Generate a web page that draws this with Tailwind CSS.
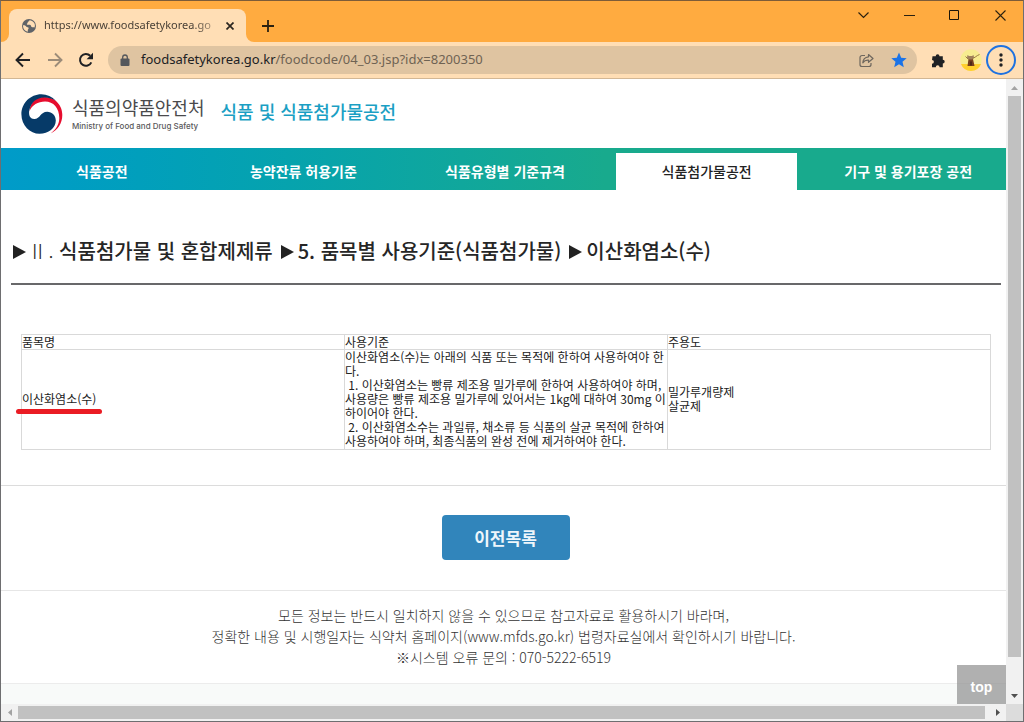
<!DOCTYPE html>
<html lang="ko">
<head>
<meta charset="utf-8">
<title>식품 및 식품첨가물공전</title>
<script src="https://cdn.jsdelivr.net/npm/@tailwindcss/browser@4"></script>
</head>
<body class="h-screen overflow-hidden bg-white font-['Noto_Sans_CJK_KR',sans-serif] text-[#333]">
<div class="flex h-full flex-col border border-[#6e6e70] border-t-[#7d5c38]">

  <!-- Tab strip -->
  <div class="flex h-[41px] shrink-0 bg-[#ffab40]">
    <div class="flex w-2 items-end bg-[#ffdeb5]"><div class="h-full w-full rounded-br-lg bg-[#ffab40]"></div></div>
    <div class="mt-2 flex w-[237px] items-center rounded-t-lg bg-[#ffdeb5] pr-2 pl-3">
      <svg class="size-4 shrink-0" viewBox="0 0 16 16"><circle cx="8" cy="8" r="7" fill="#5f6368"/><path d="M2 7.2c1.500-.2 2.500.3 3.200 1.200.6.8 1.800.5 2.300 1.300.5 1-.6 1.400-.7 2.300v1.800C4 13.300 2 11 2 8zM8.300 2.200c.3 1-.7 1.300-1.300 1.600-.6.400.2 1.200-.8 1.700-.7.400-.3 1.400.6 1.300 1-.1 2-.4 2.700.3.600.6.300 1.600 1.200 2 1 .4 2-.1 2.800.4.5-1.200.6-2.800 0-4C12.600 3.500 10.600 2.200 8.300 2.200z" fill="#ffdeb5"/></svg>
      <span class="ml-[7px] flex-1 font-['Noto_Sans',sans-serif] text-[11px] whitespace-nowrap text-[#4b4238] [mask-image:linear-gradient(to_right,black_88%,rgb(0_0_0/0.4))]">https://www.foodsafetykorea.go</span>
      <button aria-label="탭 닫기" class="ml-2 flex size-4 shrink-0 items-center justify-center"><svg class="size-2" viewBox="0 0 8 8"><path d="M.5.5l7 7M7.500.5l-7 7" stroke="#2b2620" stroke-width="1.700"/></svg></button>
    </div>
    <div class="w-2 bg-[#ffdeb5]"><div class="h-full w-full rounded-bl-lg bg-[#ffab40]"></div></div>
    <button aria-label="새 탭" class="mt-2 flex w-7 items-center justify-center"><svg class="size-3" viewBox="0 0 12 12"><path d="M6 0v12M0 6h12" stroke="#2b2110" stroke-width="1.800"/></svg></button>
    <div class="ml-auto flex h-7 items-center">
      <button aria-label="탭 검색" class="flex w-[45px] justify-center"><svg class="h-[7px] w-[11px]" viewBox="0 0 11 7" fill="none"><path d="M.5.5l5 5 5-5" stroke="#2b2110" stroke-width="1.200"/></svg></button>
      <button aria-label="최소화" class="flex w-[46px] justify-center"><svg class="h-[11px] w-[11px]" viewBox="0 0 11 11"><path d="M0 5.500h11" stroke="#2b2110"/></svg></button>
      <button aria-label="최대화" class="flex w-[45px] justify-center"><svg class="h-[11px] w-[11px]" viewBox="0 0 11 11"><path d="M.5.5h9v9h-9z" fill="none" stroke="#1c1509"/></svg></button>
      <button aria-label="닫기" class="flex w-[46px] justify-center"><svg class="h-[11px] w-[11px]" viewBox="0 0 11 11"><path d="M.5.5l10 10M10.500.5l-10 10" stroke="#2b2110" stroke-width="1.100"/></svg></button>
    </div>
  </div>

  <!-- Toolbar -->
  <div class="flex h-9 shrink-0 items-center bg-[#ffdeb5] pr-[7px] pl-[14px]">
    <button aria-label="뒤로" class="mr-4 size-4"><svg viewBox="0 0 16 16" fill="none" stroke="#202124" stroke-width="1.900"><path d="M15 8H2M8 1.500L1.500 8 8 14.500"/></svg></button>
    <button aria-label="앞으로" class="mr-[15px] size-4"><svg viewBox="0 0 16 16" fill="none" stroke="#9c8c79" stroke-width="1.900"><path d="M1 8h13M8 1.500L14.500 8 8 14.500"/></svg></button>
    <button aria-label="새로고침" class="mr-[14px] size-4"><svg viewBox="0 0 16 16"><path d="M13.300 10.300A5.900 5.900 0 1 1 12.200 3.800" fill="none" stroke="#202124" stroke-width="2"/><path d="M15 .8v6.400H8.600z" fill="#202124"/></svg></button>
    <div class="flex h-7 flex-1 items-center rounded-full bg-[#dfc4a1] pr-[10px] pl-3">
      <svg class="h-3 w-[10px]" viewBox="0 0 10 12"><path d="M2.700 5V3.300a2.300 2.300 0 0 1 4.600 0V5" fill="none" stroke="#54575b" stroke-width="1.300"/><rect x=".5" y="4.500" width="9" height="7.500" rx="1" fill="#54575b"/></svg>
      <div class="ml-[11px] flex-1 font-['Noto_Sans',sans-serif] text-[13px] text-[#6f6353]"><span class="text-[#202124]">foodsafetykorea.go.kr</span>/foodcode/04_03.jsp?idx=8200350</div>
      <button aria-label="공유" class="mr-[17px] size-[15px]"><svg viewBox="0 0 15 15" fill="none" stroke="#6e675e" stroke-width="1.200" stroke-linejoin="round"><path d="M6 2.500H3a2 2 0 0 0-2 2v7a2 2 0 0 0 2 2h7a2 2 0 0 0 2-2V10"/><path d="M9.500 1.500L14 5.500 9.500 9.300V7.200C6.800 7 5 8 3.800 9.800 4 6.500 5.800 4.200 9.500 3.800z"/></svg></button>
      <button aria-label="북마크" class="size-4"><svg viewBox="0 0 16 16"><path d="M8 .6l2.200 5.100 5.500.5-4.200 3.600 1.300 5.400L8 12.300l-4.800 2.900 1.300-5.400L.3 6.200l5.500-.5z" fill="#1a73e8"/></svg></button>
    </div>
    <button aria-label="확장 프로그램" class="ml-[14px] size-[15px]"><svg viewBox="0 0 15 15"><path d="M1.500 3.200h3.200a1.900 1.900 0 1 1 3.800 0h3.300v3.500a1.900 1.900 0 1 1 0 3.800v3.700H8.600a1.900 1.900 0 0 0-3.800 0H1V10.700a1.900 1.900 0 0 0 0-3.800z" fill="#202124"/></svg></button>
    <button aria-label="프로필" class="ml-[14px] size-[22px]"><svg viewBox="0 0 22 22"><circle cx="11" cy="11" r="10.700" fill="#f7ec90"/><path d="M1 15h20a10.700 10.700 0 0 1-20 0z" fill="#ffd02e"/><path d="M8.500 10h4.500l1.500 7h-7z" fill="#78401f"/><path d="M7.500 6l1.500 1h3l1.500-1 .5 2.500-1.500 2h-4l-1.500-2z" fill="#a0805c"/><path d="M12 9.500c3-.5 4.500-3 7.500-4M5.500 7.500l3 3" stroke="#9b7b42" stroke-width="1" fill="none"/><path d="M10 12.500h2v4h-2z" fill="#4d2818"/></svg></button>
    <button aria-label="메뉴" class="ml-1 size-[30px]"><svg viewBox="0 0 30 30"><circle cx="15" cy="15" r="14" fill="none" stroke="#1f72e0" stroke-width="2"/><circle cx="15" cy="10" r="1.700" fill="#202124"/><circle cx="15" cy="15" r="1.700" fill="#202124"/><circle cx="15" cy="20" r="1.700" fill="#202124"/></svg></button>
  </div>

  <!-- Page viewport -->
  <div class="flex min-h-0 flex-1 border-t border-[#d2b795]">
    <div class="flex min-w-0 flex-1 flex-col">
      <div class="relative flex min-h-0 flex-1 flex-col overflow-hidden">
        <header class="flex h-[69px] shrink-0 items-center pl-5">
          <a href="#" class="flex items-center">
            <svg class="h-10 w-[42px]" viewBox="0 0 42 40"><path d="M8.500 17C9 9 14 3 22 3c6 0 10 1.500 13 4 4 3.500 6.300 8.500 6.300 14C41.300 29 37 36 29.500 39.600 35.500 35 38.300 30 38.300 24 38.300 14 32.500 7.400 24 7.400 17 7.400 11 11 8.500 17z" fill="#e60d2e"/><path d="M35 7C31 2.500 26 .2 20.300.2 9.500.2.400 9 .400 20.200S9 39.800 18.500 39.800c9 0 16.300-5.800 16.300-13.300 0-5-3.800-8.700-8.600-8.700-7 0-6.700 7.200-13 7.200-4.500 0-6-4.500-4.700-9.500C10.300 8.500 15.500 3.600 23 3.600c5 0 9 1.200 12 3.400z" fill="#063a68"/></svg>
            <span class="ml-[9px] flex flex-col">
              <span class="text-[18px] leading-5 text-[#4a4a4c]">식품의약품안전처</span>
              <span class="mt-1 font-[Inter,sans-serif] text-[8px] leading-[10px] font-medium text-[#59595b]">Ministry of Food and Drug Safety</span>
            </span>
          </a>
          <a href="#" class="ml-4 pb-[5px] text-[18px] leading-6 font-medium text-[#1b9fc4]">식품 및 식품첨가물공전</a>
        </header>

        <nav class="shrink-0 bg-linear-to-r from-[#009bc9] to-[#18aa8d] to-60%">
          <ul class="-mr-[3px] grid h-[42px] grid-cols-5 text-center text-[14px] leading-[38px] font-bold text-white">
            <li class="pt-1"><a href="#">식품공전</a></li>
            <li class="pt-1"><a href="#">농약잔류 허용기준</a></li>
            <li class="pt-1"><a href="#">식품유형별 기준규격</a></li>
            <li class="mx-[10px] mt-[5px] bg-white leading-9 font-medium text-[#222]"><a href="#">식품첨가물공전</a></li>
            <li class="pt-1"><a href="#">기구 및 용기포장 공전</a></li>
          </ul>
        </nav>

        <main class="shrink-0">
          <h1 class="mt-[46px] mr-[5px] ml-[10px] flex items-center gap-2 border-b-2 border-[#68686a] pb-[17px] text-[20px] leading-[30px] font-medium whitespace-nowrap text-[#262626]">
            <span><svg class="mr-[6px] ml-[2px] inline h-[14px] w-[13px] align-baseline" viewBox="0 0 14 14" preserveAspectRatio="none"><path d="M0 0l14 7-14 7z" fill="#222"/></svg><span class="font-light">II .</span> 식품첨가물 및 혼합제제류</span>
            <span><svg class="mr-1 inline h-[14px] w-[13px] align-baseline" viewBox="0 0 14 14" preserveAspectRatio="none"><path d="M0 0l14 7-14 7z" fill="#222"/></svg>5. 품목별 사용기준(식품첨가물)</span>
            <span><svg class="mr-1 inline h-[14px] w-[13px] align-baseline" viewBox="0 0 14 14" preserveAspectRatio="none"><path d="M0 0l14 7-14 7z" fill="#222"/></svg>이산화염소(수)</span>
          </h1>

          <div class="mt-[49px] pr-[15px] pl-5">
            <table class="w-full table-fixed border-collapse text-[12px] leading-[14px] text-[#222]">
              <thead>
                <tr class="text-left">
                  <th class="border border-[#d9d9d9] p-0 font-normal">품목명</th>
                  <th class="border border-[#d9d9d9] p-0 font-normal">사용기준</th>
                  <th class="border border-[#d9d9d9] p-0 font-normal">주용도</th>
                </tr>
              </thead>
              <tbody>
                <tr>
                  <td class="border border-[#d9d9d9] p-0 pb-px"><span class="relative">이산화염소(수)<span class="absolute top-[19px] -left-[6px] h-[5px] w-[86px] rounded-full bg-[#ea1c24]"></span></span></td>
                  <td class="border border-[#d9d9d9] p-0 pb-px">이산화염소(수)는 아래의 식품 또는 목적에 한하여 사용하여야 한다.<br>&nbsp;1. 이산화염소는 빵류 제조용 밀가루에 한하여 사용하여야 하며, 사용량은 빵류 제조용 밀가루에 있어서는 1kg에 대하여 30mg 이하이어야 한다.<br>&nbsp;2. 이산화염소수는 과일류, 채소류 등 식품의 살균 목적에 한하여 사용하여야 하며, 최종식품의 완성 전에 제거하여야 한다.</td>
                  <td class="border border-[#d9d9d9] p-0 pb-px">밀가루개량제<br>살균제</td>
                </tr>
              </tbody>
            </table>
          </div>

          <div class="mt-[35px] flex justify-center border-t border-[#dcdcdc] pt-[29px] pb-[30px]">
            <button class="ml-1 h-[45px] w-32 rounded bg-[#3185bb] text-[17px] font-bold text-[#eef6fb]">이전목록</button>
          </div>
        </main>

        <footer class="flex flex-1 flex-col border-t border-[#e6e6e6]">
          <p class="pt-[14px] pb-[15px] text-center text-[14px] leading-[21px] font-light text-[#333]">모든 정보는 반드시 일치하지 않을 수 있으므로 참고자료로 활용하시기 바라며,<br>정확한 내용 및 시행일자는 식약처 홈페이지(www.mfds.go.kr) 법령자료실에서 확인하시기 바랍니다.<br>※시스템 오류 문의 : 070-5222-6519</p>
          <div class="flex-1 border-t border-[#ececec] bg-[#f8faf9]"></div>
        </footer>

        <a href="#" class="absolute right-0 bottom-0 flex h-[39px] w-[49px] items-center justify-center bg-[#969696]/75 pt-[6px] font-['Liberation_Sans',sans-serif] text-[14px] font-bold text-white">top</a>
      </div>

      <!-- Horizontal scroll bar -->
      <div class="flex h-[17px] shrink-0 items-center bg-[#f1f1f1]">
        <span class="flex w-[17px] justify-center"><svg class="h-[7px] w-1" viewBox="0 0 4 7"><path d="M4 0v7L0 3.500z" fill="#a3a3a3"/></svg></span>
        <span class="h-[13px] flex-1 bg-[#c1c1c1]"></span>
        <span class="ml-1 flex w-[17px] justify-center"><svg class="h-[7px] w-1" viewBox="0 0 4 7"><path d="M0 0v7l4-3.500z" fill="#505050"/></svg></span>
      </div>
    </div>

    <!-- Vertical scroll bar -->
    <div class="flex w-[17px] shrink-0 flex-col items-center bg-[#f1f1f1]">
      <span class="flex h-[17px] items-center"><svg class="h-1 w-[7px]" viewBox="0 0 7 4"><path d="M0 4h7L3.500 0z" fill="#a3a3a3"/></svg></span>
      <span class="w-[13px] flex-1 bg-[#c1c1c1]"></span>
      <span class="mt-[30px] flex h-[17px] items-center"><svg class="h-1 w-[7px]" viewBox="0 0 7 4"><path d="M0 0h7L3.500 4z" fill="#505050"/></svg></span>
      <span class="h-[17px] w-full bg-[#dcdcdc]"></span>
    </div>
  </div>
</div>
</body>
</html>
